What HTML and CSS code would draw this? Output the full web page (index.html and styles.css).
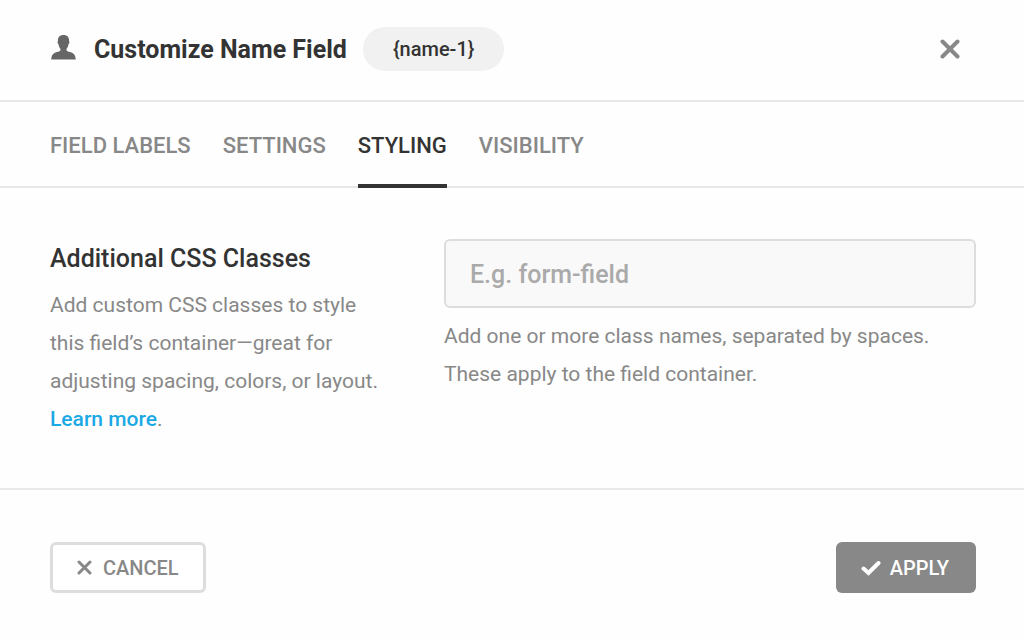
FILE: index.html
```html
<!DOCTYPE html>
<html lang="en">
<head>
<meta charset="utf-8">
<title>Customize Name Field</title>
<link rel="stylesheet" href="styles.css">
</head>
<body>
<main class="dialog">
  <header class="header">
    <svg class="user-icon" viewBox="0 0 26 28" aria-hidden="true"><path d="M13.500 0C9.800 0 7.700 2 7.900 6.300c-.6.300-.4 2.300.5 2.800.4 2.300 1.200 3.900 2.100 4.900v1.200c-.3.900-1.400 1.200-3.600 1.800C3.300 18 1.300 20.200 1.300 24.500h24.400c0-4.300-2-6.500-5.600-7.500-2.200-.6-3.300-.9-3.600-1.800V14c.9-1 1.700-2.600 2.100-4.900.9-.5 1.100-2.500.5-2.800C19.300 2 17.200 0 13.500 0z"/></svg>
    <h1 class="title">Customize Name Field</h1>
    <span class="tag">{name-1}</span>
    <button class="close" type="button" aria-label="Close"><svg class="close-icon" viewBox="0 0 20 20"><path d="M2.500 2.500l15 15M17.500 2.500l-15 15"/></svg></button>
  </header>
  <nav class="tabs">
    <button class="tab" type="button">FIELD LABELS</button>
    <button class="tab" type="button">SETTINGS</button>
    <button class="tab tab-active" type="button">STYLING</button>
    <button class="tab" type="button">VISIBILITY</button>
  </nav>
  <section class="content">
    <div class="intro">
      <label class="label" for="classes">Additional CSS Classes</label>
      <p class="text">Add custom CSS classes to style this field’s container—great for adjusting spacing, colors, or layout. <a class="link" href="#">Learn more</a>.</p>
    </div>
    <div class="field">
      <input class="input" id="classes" type="text" placeholder="E.g. form-field">
      <p class="text">Add one or more class names, separated by spaces. These apply to the field container.</p>
    </div>
  </section>
  <footer class="footer">
    <button class="button cancel" type="button"><svg class="cancel-icon" viewBox="0 0 15 15" aria-hidden="true"><path d="M2 2l11 11M13 2L2 13"/></svg>CANCEL</button>
    <button class="button apply" type="button"><svg class="check-icon" viewBox="0 0 20 16" aria-hidden="true"><path d="M2.500 8.500l5 4.500L17.500 3"/></svg>APPLY</button>
  </footer>
</main>
</body>
</html>
```
FILE: styles.css
```css
* { box-sizing: border-box; }
body { margin: 0; background: #fefefe; color: #333; font-family: Roboto, sans-serif; }
button { font-family: inherit; cursor: pointer; }
.header { display: flex; align-items: center; padding: 26px 50px 28px; border-bottom: 2px solid #e8e8e8; }
.user-icon { width: 26px; height: 28px; fill: #666; }
.title { margin: 0 16px 0 18px; padding-top: 2px; font-size: 25px; line-height: 44px; font-weight: 700; }
.tag { padding: 0 30px; border-radius: 22px; background: #f1f1f1; font-size: 20px; line-height: 44px; font-weight: 500; }
.close { display: flex; margin-left: auto; padding: 0 14px 0 0; border: 0; background: none; }
.close-icon { width: 20px; height: 20px; }
.close-icon path, .cancel-icon path, .check-icon path { fill: none; stroke: #888; stroke-width: 4; stroke-linecap: round; }
.tabs { display: flex; gap: 32px; padding: 0 50px; border-bottom: 2px solid #e8e8e8; }
.tab { margin-bottom: -2px; padding: 6px 0 0; border: 0; border-bottom: 4px solid transparent; background: none; color: #888; font-size: 22px; line-height: 76px; font-weight: 500; }
.tab-active { border-color: #333; color: #333; }
.content { display: grid; grid-template-columns: 344px 1fr; gap: 50px; padding: 51px 48px 50px 50px; border-bottom: 2px solid #e8e8e8; }
.label { display: block; padding-top: 2px; font-size: 25px; line-height: 36px; font-weight: 500; }
.text { margin: 9px 0 0; color: #888; font-size: 21px; line-height: 38px; }
.link { color: #1ba9e5; font-weight: 500; text-decoration: none; }
.input { display: block; width: 100%; height: 69px; padding: 2px 24px 0; border: 2px solid #ddd; border-radius: 6px; background: #f9f9f9; color: #333; font: 500 25px Roboto, sans-serif; }
.input::placeholder { color: #aaa; }
.footer { display: flex; justify-content: space-between; padding: 52px 48px 48px 50px; }
.button { display: flex; align-items: center; height: 51px; border-radius: 6px; font-size: 20px; font-weight: 500; }
.cancel { padding: 0 24px; gap: 11px; border: 3px solid #ddd; background: #fff; color: #888; }
.cancel-icon { width: 15px; height: 15px; }
.cancel-icon path { stroke-width: 3; }
.apply { padding: 0 27px 0 25px; gap: 9px; border: 0; background: #888; color: #fff; }
.check-icon { width: 20px; height: 16px; }
.check-icon path { stroke: #fff; }
```
